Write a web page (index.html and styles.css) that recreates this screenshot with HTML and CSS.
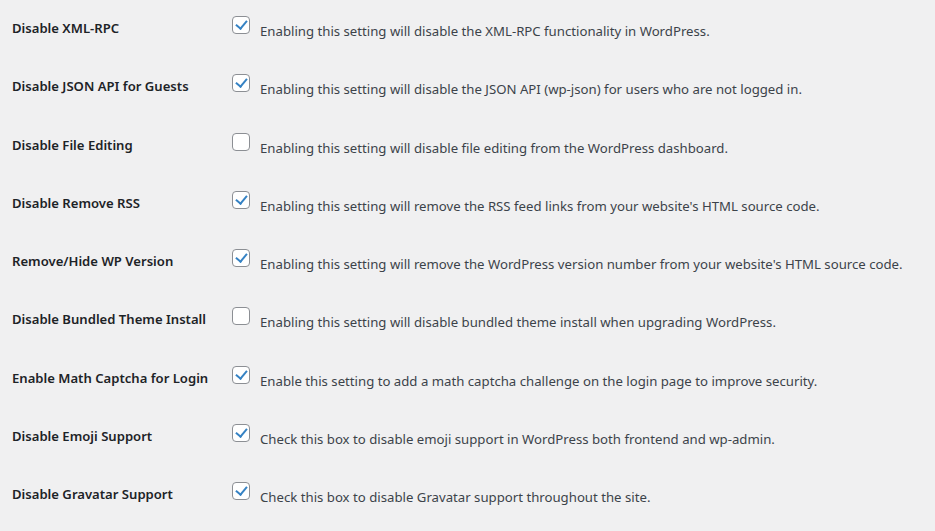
FILE: index.html
```html
<!DOCTYPE html>
<html>
<head>
<meta charset="utf-8">
<link rel="stylesheet" href="styles.css">
</head>
<body>
<div class="form">
  <div class="row"><div class="label">Disable XML-RPC</div><div class="field"><span class="cb on"></span><span class="desc">Enabling this setting will disable the XML-RPC functionality in WordPress.</span></div></div>
  <div class="row"><div class="label">Disable JSON API for Guests</div><div class="field"><span class="cb on"></span><span class="desc">Enabling this setting will disable the JSON API (wp-json) for users who are not logged in.</span></div></div>
  <div class="row"><div class="label">Disable File Editing</div><div class="field"><span class="cb"></span><span class="desc">Enabling this setting will disable file editing from the WordPress dashboard.</span></div></div>
  <div class="row"><div class="label">Disable Remove RSS</div><div class="field"><span class="cb on"></span><span class="desc">Enabling this setting will remove the RSS feed links from your website's HTML source code.</span></div></div>
  <div class="row"><div class="label">Remove/Hide WP Version</div><div class="field"><span class="cb on"></span><span class="desc">Enabling this setting will remove the WordPress version number from your website's HTML source code.</span></div></div>
  <div class="row"><div class="label">Disable Bundled Theme Install</div><div class="field"><span class="cb"></span><span class="desc">Enabling this setting will disable bundled theme install when upgrading WordPress.</span></div></div>
  <div class="row"><div class="label">Enable Math Captcha for Login</div><div class="field"><span class="cb on"></span><span class="desc">Enable this setting to add a math captcha challenge on the login page to improve security.</span></div></div>
  <div class="row"><div class="label">Disable Emoji Support</div><div class="field"><span class="cb on"></span><span class="desc">Check this box to disable emoji support in WordPress both frontend and wp-admin.</span></div></div>
  <div class="row"><div class="label">Disable Gravatar Support</div><div class="field"><span class="cb on"></span><span class="desc">Check this box to disable Gravatar support throughout the site.</span></div></div>
</div>
</body>
</html>
```
FILE: styles.css
```css
html, body {
  margin: 0;
  padding: 0;
  background: #f0f0f1;
  font-family: "Noto Sans", "Open Sans", sans-serif;
  color: #3c434a;
}
.form {
  padding-left: 12px;
}
.row {
  display: flex;
  height: 58.25px;
}
.label {
  width: 220px;
  padding-top: 18px;
  font-size: 13.1px;
  line-height: 20px;
  font-weight: 600;
  color: #1d2327;
}
.field {
  display: flex;
  align-items: flex-start;
}
.cb {
  box-sizing: border-box;
  width: 18px;
  height: 18px;
  margin-top: 16px;
  border: 1px solid #8c8f94;
  border-radius: 4px;
  background: #fff;
  position: relative;
}
.cb.on::after {
  content: "";
  position: absolute;
  left: 5px;
  top: 1px;
  width: 5px;
  height: 9px;
  border-right: 2.5px solid #3582c4;
  border-bottom: 2.5px solid #3582c4;
  transform: rotate(40deg);
}
.desc {
  margin-left: 10px;
  margin-top: 21px;
  font-size: 13.2px;
  line-height: 20px;
  color: #3c434a;
}
```
